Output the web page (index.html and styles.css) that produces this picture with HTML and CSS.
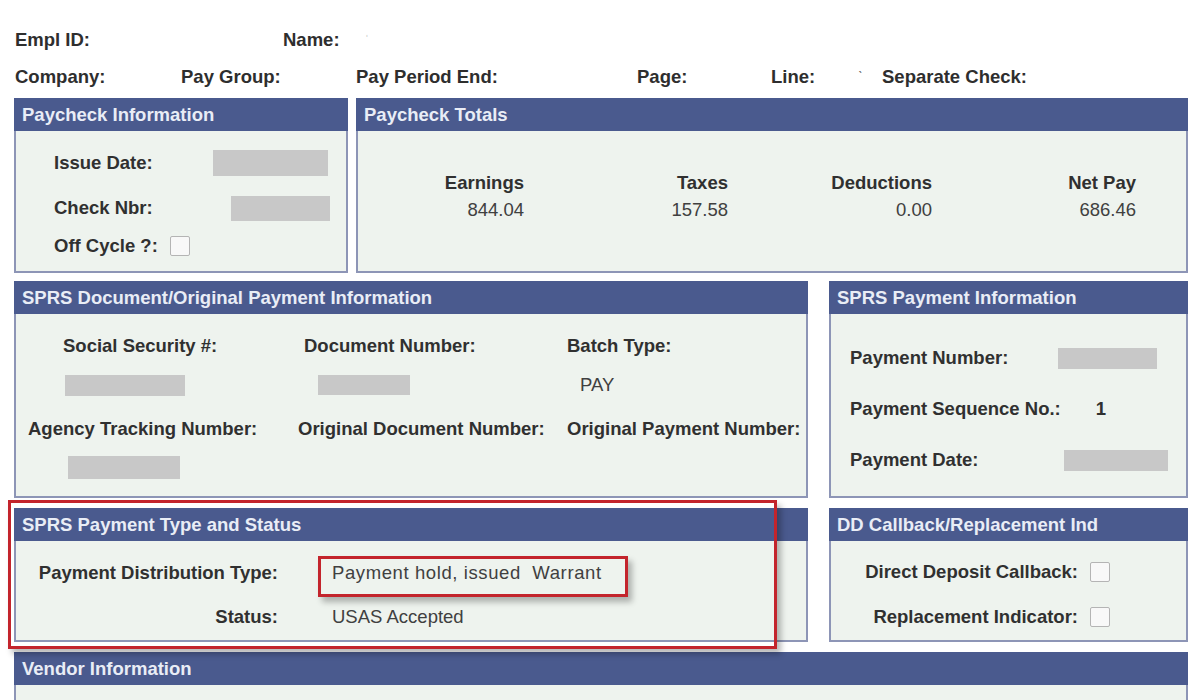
FILE: index.html
```html
<!DOCTYPE html>
<html>
<head>
<meta charset="utf-8">
<title>Paycheck</title>
<link rel="stylesheet" href="styles.css">
</head>
<body>
<div class="page">
  <div class="info info-1">
    <span>Empl ID:</span>
    <span>Name: <span class="faint">ˈ</span></span>
  </div>
  <div class="info info-2">
    <span>Company:</span>
    <span>Pay Group:</span>
    <span>Pay Period End:</span>
    <span>Page:</span>
    <span>Line:</span>
    <span class="tick">ˋ</span>
    <span>Separate Check:</span>
  </div>

  <div class="row row-1">
    <section class="panel">
      <div class="panel-head">Paycheck Information</div>
      <div class="panel-body pc-info">
        <div class="pc-line pc-a"><span class="lbl">Issue Date:</span><span class="redact r-issue"></span></div>
        <div class="pc-line pc-b"><span class="lbl">Check Nbr:</span><span class="redact r-check"></span></div>
        <div class="pc-line pc-c"><span class="lbl">Off Cycle ?:</span><span class="cbox cb-off"></span></div>
      </div>
    </section>
    <section class="panel">
      <div class="panel-head">Paycheck Totals</div>
      <div class="panel-body totals">
        <span class="lbl">Earnings</span>
        <span class="lbl">Taxes</span>
        <span class="lbl">Deductions</span>
        <span class="lbl">Net Pay</span>
        <span class="val">844.04</span>
        <span class="val">157.58</span>
        <span class="val">0.00</span>
        <span class="val">686.46</span>
      </div>
    </section>
  </div>

  <div class="row row-2">
    <section class="panel">
      <div class="panel-head">SPRS Document/Original Payment Information</div>
      <div class="panel-body doc">
        <div class="doc-row d1">
          <span class="lbl ml35">Social Security #:</span>
          <span class="lbl ml6">Document Number:</span>
          <span class="lbl">Batch Type:</span>
        </div>
        <div class="doc-row d2">
          <span><span class="redact r-ssn"></span></span>
          <span><span class="redact r-doc"></span></span>
          <span class="val ml13">PAY</span>
        </div>
        <div class="doc-row d3">
          <span class="lbl">Agency Tracking Number:</span>
          <span class="lbl">Original Document Number:</span>
          <span class="lbl">Original Payment Number:</span>
        </div>
        <div class="doc-row d4">
          <span><span class="redact r-agency"></span></span>
          <span></span>
          <span></span>
        </div>
      </div>
    </section>
    <section class="panel">
      <div class="panel-head">SPRS Payment Information</div>
      <div class="panel-body payinfo">
        <div class="pi-line pi-a"><span class="lbl">Payment Number:</span><span class="redact r-paynum"></span></div>
        <div class="pi-line pi-b"><span class="lbl">Payment Sequence No.:</span><span class="lbl seq">1</span></div>
        <div class="pi-line pi-c"><span class="lbl">Payment Date:</span><span class="redact r-paydate"></span></div>
      </div>
    </section>
  </div>

  <div class="row row-3">
    <section class="panel">
      <div class="panel-head">SPRS Payment Type and Status</div>
      <div class="panel-body status">
        <span class="lbl">Payment Distribution Type:</span>
        <span class="val wide">Payment hold, issued&nbsp; Warrant</span>
        <span class="lbl">Status:</span>
        <span class="val">USAS Accepted</span>
      </div>
    </section>
    <section class="panel">
      <div class="panel-head">DD Callback/Replacement Ind</div>
      <div class="panel-body dd">
        <span class="lbl">Direct Deposit Callback:</span>
        <span class="cbox"></span>
        <span class="lbl">Replacement Indicator:</span>
        <span class="cbox"></span>
      </div>
    </section>
  </div>

  <section class="panel vendor">
    <div class="panel-head">Vendor Information</div>
    <div class="panel-body"></div>
  </section>

  <div class="annot annot-big"></div>
  <div class="annot annot-small"></div>
</div>
</body>
</html>
```

FILE: styles.css
```css
* { box-sizing: border-box; }

body {
  margin: 0;
  background: #ffffff;
  font-family: "Liberation Sans", Arial, sans-serif;
  font-size: 18.5px;
  color: #333333;
}

.page {
  position: relative;
  height: 700px;
  overflow: hidden;
  padding: 29px 12px 0 14px;
}

.info {
  display: grid;
  line-height: 22px;
  font-weight: bold;
  padding-left: 1px;
  color: #2e2e2e;
}
.info-1 { grid-template-columns: 268px auto; height: 37px; }
.info-2 { grid-template-columns: 166px 175px 281px 134px 87px 24px auto; height: 22px; }
.faint { color: #c8c8c8; font-weight: normal; font-size: 13px; margin-left: 20px; vertical-align: top; }
.tick { color: #666; font-weight: normal; font-size: 14px; }

.row { display: grid; }
.row-1 { grid-template-columns: 334px 832px; column-gap: 8px; height: 175px; margin-top: 10px; }
.row-2 { grid-template-columns: 794px 359px; column-gap: 21px; height: 217px; margin-top: 8px; }
.row-3 { grid-template-columns: 794px 359px; column-gap: 21px; height: 134px; margin-top: 10px; }

.panel {
  display: flex;
  flex-direction: column;
  border: 2px solid #8d95b6;
  background: #eef3ee;
}
.panel-head {
  margin: -2px -2px 0;
  height: 33px;
  line-height: 33px;
  padding-left: 8px;
  background: #4a5a8e;
  color: #e9edf6;
  font-weight: bold;
  white-space: nowrap;
}
.panel-body { flex: 1; }

.lbl { font-weight: bold; color: #303030; white-space: nowrap; line-height: 22px; }
.val { color: #404040; white-space: nowrap; line-height: 22px; }
.wide { letter-spacing: 0.6px; }

.redact {
  display: block;
  background: #c8c8c8;
  filter: blur(0.6px);
}

.cbox {
  display: block;
  width: 20px;
  height: 20px;
  background: #f8f8f8;
  border: 1px solid #b4b4b4;
  border-radius: 2px;
}

/* Paycheck information */
.pc-info { padding: 10px 0 0 38px; }
.pc-line { display: flex; align-items: center; }
.pc-a { height: 44px; }
.pc-b { height: 46px; }
.pc-c { height: 30px; }
.pc-line .redact { margin-left: auto; }
.r-issue { width: 115px; height: 26px; margin-right: 18px; }
.r-check { width: 99px; height: 25px; margin-right: 16px; }
.cb-off { margin-left: 12px; }

/* Totals */
.totals {
  display: grid;
  grid-template-columns: 166px 204px 204px 204px;
  grid-template-rows: 22px 27px;
  align-items: end;
  padding-top: 41px;
  text-align: right;
}
.totals .val { line-height: 22px; }

/* Document */
.doc { padding: 21px 0 0 12px; }
.doc-row { display: grid; grid-template-columns: 270px 269px auto; }
.d1 { height: 22px; }
.d2 { height: 22px; margin-top: 17px; align-items: center; }
.d3 { height: 22px; margin-top: 22px; }
.d4 { margin-top: 16px; }
.ml35 { margin-left: 35px; }
.ml6 { margin-left: 6px; }
.ml13 { margin-left: 13px; }
.r-ssn { width: 120px; height: 21px; margin-left: 37px; }
.r-doc { width: 92px; height: 20px; margin-left: 20px; }
.r-agency { width: 112px; height: 23px; margin-left: 40px; }

/* Payment information */
.payinfo { padding: 33px 0 0 19px; }
.pi-line { display: flex; align-items: center; height: 22px; }
.pi-b, .pi-c { margin-top: 29px; }
.pi-line .redact, .pi-line .seq { margin-left: auto; }
.r-paynum { width: 99px; height: 21px; margin-right: 29px; }
.seq { margin-right: 80px; }
.r-paydate { width: 104px; height: 21px; margin-right: 18px; }

/* Status */
.status {
  display: grid;
  grid-template-columns: 262px auto;
  column-gap: 54px;
  row-gap: 22px;
  align-content: start;
  padding-top: 21px;
}
.status .lbl { text-align: right; }

/* DD */
.dd {
  display: grid;
  grid-template-columns: 247px 20px;
  column-gap: 12px;
  row-gap: 23px;
  align-items: center;
  align-content: start;
  padding-top: 20px;
}
.dd .lbl { text-align: right; }

/* Vendor */
.vendor { margin-top: 10px; height: 100px; }

/* Annotations */
.annot {
  position: absolute;
  border: 3px solid #c3242c;
  box-shadow: 4px 5px 6px rgba(0, 0, 0, 0.28);
  pointer-events: none;
}
.annot-big { left: 8px; top: 500px; width: 769px; height: 149px; }
.annot-small { left: 318px; top: 556px; width: 310px; height: 41px; }
```
